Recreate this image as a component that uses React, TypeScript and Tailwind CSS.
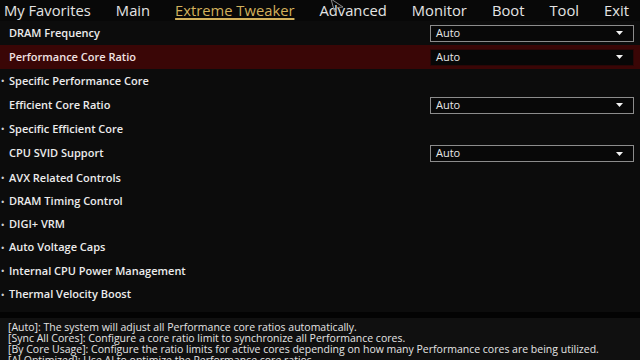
import * as React from 'react';

const tabs = ['My Favorites', 'Main', 'Extreme Tweaker', 'Advanced', 'Monitor', 'Boot', 'Tool', 'Exit'];

interface Item {
  label: string;
  kind: 'select' | 'sub';
  h: string;
  active?: boolean;
}

const items: Item[] = [
  { label: 'DRAM Frequency', kind: 'select', h: 'h-[24px]' },
  { label: 'Performance Core Ratio', kind: 'select', h: 'h-[24px]', active: true },
  { label: 'Specific Performance Core', kind: 'sub', h: 'h-[24px]' },
  { label: 'Efficient Core Ratio', kind: 'select', h: 'h-[24px]' },
  { label: 'Specific Efficient Core', kind: 'sub', h: 'h-[24px]' },
  { label: 'CPU SVID Support', kind: 'select', h: 'h-[25px]' },
  { label: 'AVX Related Controls', kind: 'sub', h: 'h-[24px]' },
  { label: 'DRAM Timing Control', kind: 'sub', h: 'h-[23px]' },
  { label: 'DIGI+ VRM', kind: 'sub', h: 'h-[23px]' },
  { label: 'Auto Voltage Caps', kind: 'sub', h: 'h-[23px]' },
  { label: 'Internal CPU Power Management', kind: 'sub', h: 'h-[24px]' },
  { label: 'Thermal Velocity Boost', kind: 'sub', h: 'h-[23px]' }
];

const help = [
  '[Auto]: The system will adjust all Performance core ratios automatically.',
  '[Sync All Cores]: Configure a core ratio limit to synchronize all Performance cores.',
  '[By Core Usage]: Configure the ratio limits for active cores depending on how many Performance cores are being utilized.',
  '[AI Optimized]: Use AI to optimize the Performance core ratios.'
];

const Select = ({ active }: { active?: boolean }) => (
  <div
    className={
      'flex h-[17px] w-[204px] items-center justify-between px-[5px] text-[11px] text-[#e8e8e8] ' +
      (active ? 'border border-[#2a0606] bg-[#070707]' : 'border-[1.5px] border-[#8c8c8c] bg-[#080808]')
    }
  >
    <span>Auto</span>
    <svg width="7" height="4" viewBox="0 0 7 4" className="mr-[5px]">
      <polygon points="0,0 7,0 3.5,4" fill="#f2f2f2" />
    </svg>
  </div>
);

const App = () => (
  <div
    className="relative flex h-[360px] w-[640px] flex-col overflow-hidden bg-[#0c0c0c] text-[#e6e6e6]"
    style={{ fontFamily: '"Open Sans", "Noto Sans", sans-serif' }}
  >
    <div className="flex h-[21px] items-center gap-[25px] bg-[#080808] pl-[4px] text-[14.75px] leading-none">
      {tabs.map(t => (
        <span
          key={t}
          className={
            t === 'Extreme Tweaker'
              ? 'text-[#d2b15c] underline decoration-[1.5px] underline-offset-[2px]'
              : 'text-[#e4e4e4]'
          }
        >
          {t}
        </span>
      ))}
    </div>
    <svg width="16" height="14" viewBox="0 0 16 14" className="absolute left-[329px] top-[-2px]">
      <polygon points="2,1 14,9 8.5,9.5 5.5,13.5" fill="none" stroke="#8a8a8a" strokeWidth="1" />
    </svg>

    <div className="flex flex-col">
      {items.map(item => (
        <div
          key={item.label}
          className={
            'relative flex items-center pl-[9px] pr-[6px] text-[11px] font-semibold ' +
            item.h +
            (item.active ? ' bg-[#3a0606]' : '')
          }
        >
          {item.kind === 'sub' && (
            <span className="absolute left-[1px] text-[9px] text-[#cfcfcf]">•</span>
          )}
          <span className={item.active ? 'text-[#f2e2e2]' : 'text-[#ececec]'}>{item.label}</span>
          {item.kind === 'select' && (
            <div className="ml-auto font-normal">
              <Select active={item.active} />
            </div>
          )}
        </div>
      ))}
    </div>

    <div className="mt-auto h-[6px] bg-[#030303]" />
    <div className="flex h-[42px] flex-col bg-[#101010] pl-[8px] pt-[4px] text-[10.5px] leading-[11px] text-[#e4e4e4]">
      {help.map(l => (
        <div key={l} className="whitespace-nowrap">
          {l}
        </div>
      ))}
    </div>
  </div>
);

export default App;
